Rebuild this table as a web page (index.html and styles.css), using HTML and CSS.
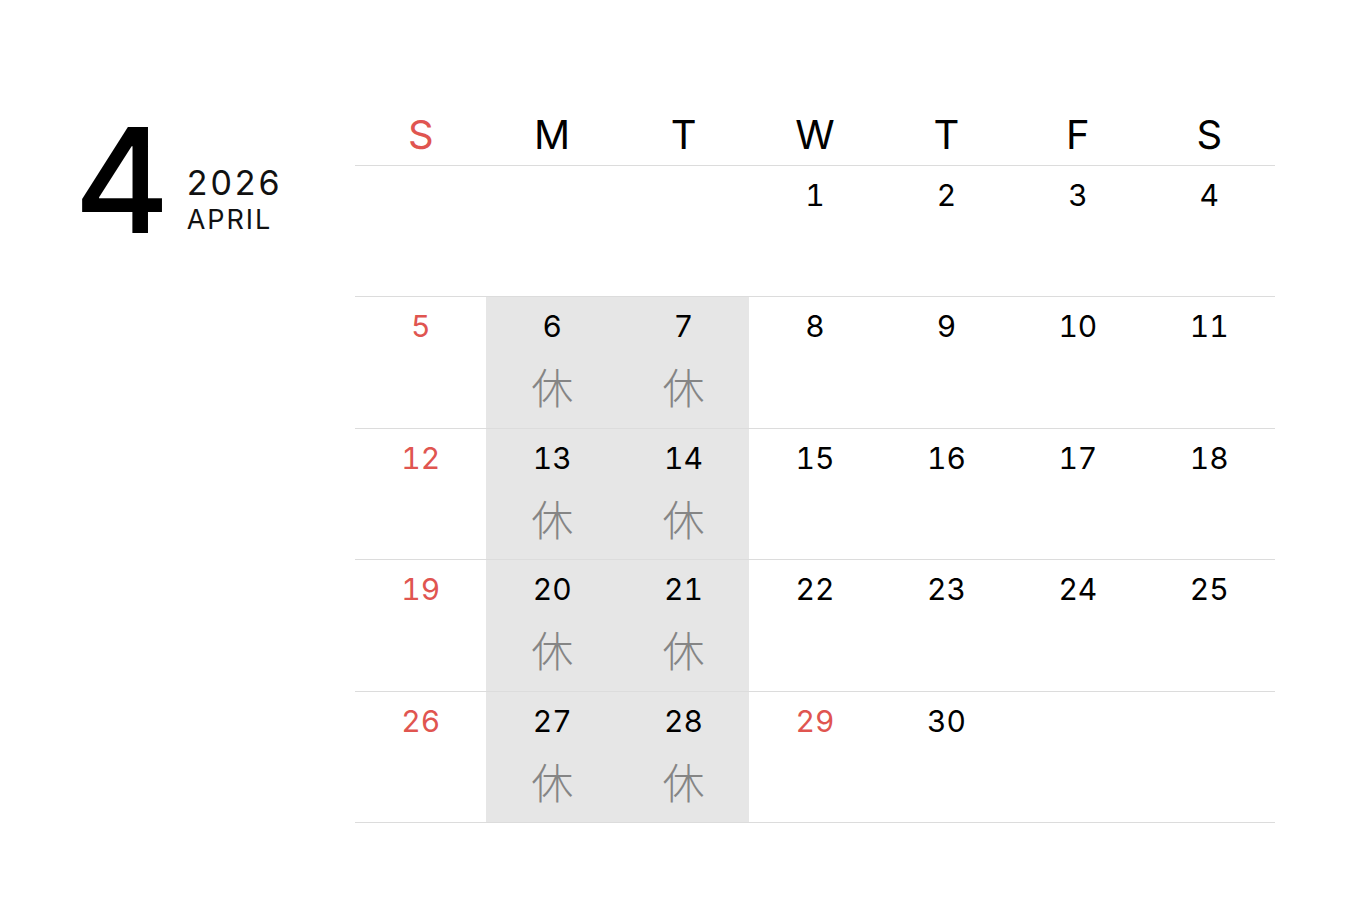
FILE: index.html
```html
<!DOCTYPE html>
<html lang="ja">
<head>
<meta charset="utf-8">
<title>2026 April</title>
<link rel="stylesheet" href="styles.css">
</head>
<body>
<div class="page">
  <div class="brand">
    <div class="month-num">4</div>
    <div class="month-text">
      <div class="year">2026</div>
      <div class="month-name">APRIL</div>
    </div>
  </div>
  <div class="cal">
    <div class="head">
      <div class="dow red">S</div>
      <div class="dow">M</div>
      <div class="dow">T</div>
      <div class="dow">W</div>
      <div class="dow">T</div>
      <div class="dow">F</div>
      <div class="dow">S</div>
    </div>
    <div class="weeks">
      <div class="week">
        <div class="day"></div>
        <div class="day"></div>
        <div class="day"></div>
        <div class="day"><span class="num">1</span></div>
        <div class="day"><span class="num">2</span></div>
        <div class="day"><span class="num">3</span></div>
        <div class="day"><span class="num">4</span></div>
      </div>
      <div class="week">
        <div class="day"><span class="num red">5</span></div>
        <div class="day off"><span class="num">6</span><span class="rest">休</span></div>
        <div class="day off"><span class="num">7</span><span class="rest">休</span></div>
        <div class="day"><span class="num">8</span></div>
        <div class="day"><span class="num">9</span></div>
        <div class="day"><span class="num">10</span></div>
        <div class="day"><span class="num">11</span></div>
      </div>
      <div class="week">
        <div class="day"><span class="num red">12</span></div>
        <div class="day off"><span class="num">13</span><span class="rest">休</span></div>
        <div class="day off"><span class="num">14</span><span class="rest">休</span></div>
        <div class="day"><span class="num">15</span></div>
        <div class="day"><span class="num">16</span></div>
        <div class="day"><span class="num">17</span></div>
        <div class="day"><span class="num">18</span></div>
      </div>
      <div class="week">
        <div class="day"><span class="num red">19</span></div>
        <div class="day off"><span class="num">20</span><span class="rest">休</span></div>
        <div class="day off"><span class="num">21</span><span class="rest">休</span></div>
        <div class="day"><span class="num">22</span></div>
        <div class="day"><span class="num">23</span></div>
        <div class="day"><span class="num">24</span></div>
        <div class="day"><span class="num">25</span></div>
      </div>
      <div class="week last">
        <div class="day"><span class="num red">26</span></div>
        <div class="day off"><span class="num">27</span><span class="rest">休</span></div>
        <div class="day off"><span class="num">28</span><span class="rest">休</span></div>
        <div class="day"><span class="num red">29</span></div>
        <div class="day"><span class="num">30</span></div>
        <div class="day"></div>
        <div class="day"></div>
      </div>
    </div>
  </div>
</div>
</body>
</html>
```

FILE: styles.css
```css
* { box-sizing: border-box; }

html, body {
  margin: 0;
  padding: 0;
  background: #ffffff;
}

body {
  font-family: Inter, "Noto Sans", "Liberation Sans", "Noto Sans CJK JP", sans-serif;
  color: #111111;
  width: 1351px;
  height: 901px;
  overflow: hidden;
}

.page {
  display: flex;
  align-items: flex-start;
  padding: 0 76px 0 74px;
}

.brand {
  width: 281px;
  flex: none;
  display: flex;
  align-items: flex-end;
  margin-top: 107px;
}

.month-num {
  font-size: 146px;
  font-weight: 500;
  line-height: 1;
  color: #000;
}

.month-text {
  display: flex;
  flex-direction: column;
  margin-left: 17px;
  margin-bottom: 19px;
}

.year {
  font-size: 34px;
  line-height: 36px;
  letter-spacing: 2.9px;
  color: #111;
}

.month-name {
  font-size: 27px;
  line-height: 28px;
  letter-spacing: 1.9px;
  color: #111;
  margin-top: 5px;
}

.cal {
  width: 920px;
  flex: none;
  margin-top: 115px;
}

.head {
  display: grid;
  grid-template-columns: repeat(7, 1fr);
  padding-bottom: 10px;
}

.dow {
  text-align: center;
  font-size: 40px;
  line-height: 40px;
  color: #000;
}

.red { color: #e05550 !important; }

.weeks {
  border-bottom: 1px solid #dcdcdc;
}

.week {
  display: grid;
  grid-template-columns: repeat(7, 1fr);
  height: 131.4px;
  border-top: 1px solid #dcdcdc;
}

.day {
  display: flex;
  flex-direction: column;
  align-items: center;
  padding-top: 14px;
}

.day.off {
  background: #e6e6e6;
}

.num {
  font-size: 30px;
  line-height: 30px;
  font-variant-numeric: tabular-nums;
  color: #000;
}

.rest {
  font-family: "Noto Sans CJK JP", sans-serif;
  font-size: 42px;
  font-weight: 300;
  line-height: 40px;
  color: #858585;
  margin-top: 25px;
}
```
